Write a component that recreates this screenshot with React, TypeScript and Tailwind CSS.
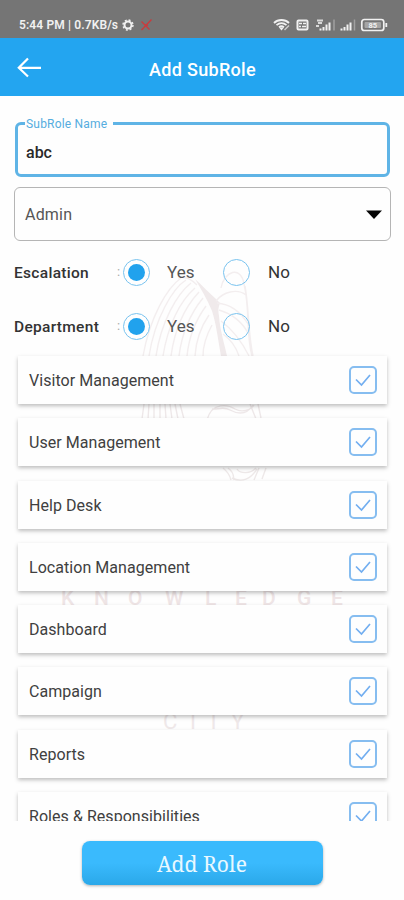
const modules = [
  "Visitor Management",
  "User Management",
  "Help Desk",
  "Location Management",
  "Dashboard",
  "Campaign",
  "Reports",
  "Roles & Responsibilities",
];

function StatusBar() {
  return (
    <div className="flex h-[38px] shrink-0 items-center justify-between bg-[#757575] pl-[19px] pr-[15px] pt-[11px] text-[#f1f1f1]">
      <div className="flex items-center">
        <span className="w-[103px] whitespace-nowrap text-[12px] font-semibold leading-4 tracking-[0.12px]">
          5:44 PM | 0.7KB/s
        </span>
        <svg width="12" height="12" viewBox="0 0 12 12" fill="none" stroke="currentColor">
          <circle cx="6" cy="6" r="3.5" strokeWidth="2" />
          <circle cx="6" cy="6" r="5" strokeWidth="1.4" strokeDasharray="2 1.93" />
        </svg>
        <svg className="ml-[6px]" width="14" height="14" viewBox="0 0 14 14" fill="none" stroke="#cb3a3c" strokeWidth="1.3">
          <path d="M1.500 3.500 9.500 11.500M11.500 1.500 1.500 12M5 6.500l3 1" />
        </svg>
      </div>
      <svg width="116" height="14" viewBox="0 0 116 14" fill="none" stroke="currentColor">
        <path d="M1 5C5 1 12 1 16 5M3.5 7.2c3-2.7 7-2.7 10 0M6 9.3c1.5-1.2 3.5-1.2 5 0" strokeWidth="1.8" />
        <path d="m8.5 12.500-2.500-3h5z" fill="currentColor" stroke="none" />
        <path d="m11.500 12 4.500-4.500" strokeWidth="1.4" opacity=".7" />
        <rect x="24.500" y="2.500" width="10" height="9" rx="1" strokeWidth="2" />
        <path d="M26 5.500h3m1 0h3M26 8.500h2m1 0h4" strokeWidth="1.300" />
        <path d="M44 2.500h6M43 8h3m-1-3h4" strokeWidth="1.800" opacity=".8" />
        <path d="M47.500 12.500v-2m3 2V9m3 3.500V6.500m3 6V4.500" strokeWidth="2" />
        <path d="M61 12.500v-11" strokeWidth="1.500" opacity=".35" />
        <path d="M68.500 12.500v-2m3 2V9m3 3.500V6.500m3 6V4.500" strokeWidth="2" />
        <path d="M81.500 12.500v-11" strokeWidth="1.500" opacity=".35" />
        <rect x="88.800" y="1.500" width="22" height="11" rx="2.500" strokeWidth="1.700" />
        <rect x="91.500" y="4" width="16.500" height="6" rx="1" fill="#a5a5a5" stroke="none" />
        <path d="M113.300 5v4" strokeWidth="1.800" />
        <text x="99.800" y="9.800" fill="currentColor" stroke="none" textAnchor="middle" fontSize="7.500" fontWeight="700">
          85
        </text>
      </svg>
    </div>
  );
}

function Header() {
  return (
    <header className="relative flex h-[58px] shrink-0 items-center justify-center bg-[#23a5f0] text-white">
      <svg className="absolute left-[17px] top-[19px]" width="25" height="21" viewBox="0 0 25 21" fill="none" stroke="currentColor" strokeWidth="2.200">
        <path d="M24 10.800H2M11 1.500 1.800 10.800l9.200 8.700" />
      </svg>
      <h1 className="pl-[1px] pt-[5px] text-[18px] font-medium leading-6 tracking-[0.3px]">Add SubRole</h1>
    </header>
  );
}

function Watermark() {
  return (
    <svg className="pointer-events-none absolute left-0 top-0" width="404" height="821" viewBox="0 0 404 821" fill="none" stroke="#f3eeef" strokeWidth="1.400">
      <path d="M143 356c7-39 24-68 38-78M149 356c6-38 24-68 37-76M156 356c5-34 21-62 35-73M163 356c5-31 17-55 32-68M171 356c4-29 15-50 28-64M179 356c3-24 11-42 24-58M187 356c2-20 8-35 19-50M195 356c1-15 5-28 14-41M203 356c0-9 3-20 9-31" />
      <path d="M178 278c6-2 13 1 19 7" />
      <path d="M195 279c8 7 14 14 21 20l4 4c-2 5-2 8-1 13 1 14 5 26 8 40h-6c-3-17-5-33-9-45-5-12-11-22-17-32z" fill="#f0eaeb" stroke="none" />
      <path d="M216 301c7-9 21-13 30-6M217 303c13 1 23 8 31 21M219 310c10 3 22 10 29 23M221 321c11 8 20 19 28 35M223 334c7 5 13 13 16 22M245 286c4 22 3 47 8 70M221 288c3-17 20-23 23-4 6 24 2 52 8 72" />
      <path d="m142 419 2-15m4 15 1-15m5 15v-15m6 15v-15m6 15-1-15m7 15-2-15m8 15-3-15m9 15-4-15M207 420c5-19 22-15 28-11 7 4 16 1 19-4M212 409c5 1 11-3 18 1 11 6 18 3 23-5M250 404l6 15m2-15 3 14" stroke="#eee8e9" />
      <path d="M223 468c5 4 7 8 8 12M228 468c7 5 5 9 6 12M237 469c3 5 14 5 19-1M232 478c10 5 19 1 25-9M259 468l-5 12m12-12-4 11" stroke="#eee9e9" />
      <text className="font-['Roboto']" x="61 94 128 165 205 235 262 297 331" y="605" fill="#efe5e6" stroke="none" fontSize="21" fontWeight="500">
        KNOWLEDGE
      </text>
      <text className="font-['Roboto']" x="163 190 207 231" y="729" fill="#efe8e9" stroke="none" fontSize="22">
        CITY
      </text>
    </svg>
  );
}

function NameField() {
  return (
    <fieldset className="ml-[15px] mr-[14px] mt-[19px] h-[62px] shrink-0 rounded-md border-[3px] border-[#5fb4e6] pl-[7px]">
      <legend className="h-[17px] w-[88px] whitespace-nowrap pl-[1px] text-[12px] leading-[18px] tracking-[0.2px] text-[#55addf]">
        SubRole Name
      </legend>
      <div className="pl-[1px] pt-[9px] text-[16px] font-medium leading-6 text-[#292929]">abc</div>
    </fieldset>
  );
}

function RoleSelect() {
  return (
    <button className="ml-[14px] mr-[13px] mt-[10px] flex h-[54px] shrink-0 items-center justify-between rounded-md border-[1.5px] border-[#b5b5b5] pl-[10px] pr-[7px] pt-[1px] text-[16px] tracking-[0.2px] text-[#555]">
      Admin
      <svg width="18" height="10" viewBox="0 0 18 10" fill="#050505">
        <path d="M1 0.500h16L9 9z" />
      </svg>
    </button>
  );
}

function Radio({ checked = false }: { checked?: boolean }) {
  return (
    <span className="flex size-[27px] shrink-0 items-center justify-center rounded-full border-[1.5px] border-[#79c3ef]">
      {checked && <span className="size-[17px] rounded-full bg-[#21a2ed]" />}
    </span>
  );
}

function RadioRow({ label }: { label: string }) {
  return (
    <div className="flex h-[54px] items-center pl-[14px]">
      <span className="w-[102px] whitespace-nowrap pt-[4px] text-[15.5px] font-medium tracking-[0.3px] text-[#333]">{label}</span>
      <span className="w-[7px] pl-[1px] text-[13px] text-[#aaa]">:</span>
      <Radio checked />
      <span className="w-[73px] pl-[17px] pt-[1px] text-[17px] text-[#555]">Yes</span>
      <Radio />
      <span className="pl-[18px] pt-[1px] text-[17px] text-[#333]">No</span>
    </div>
  );
}

function ModuleCard({ name }: { name: string }) {
  return (
    <div className="flex h-[48px] shrink-0 items-center justify-between bg-[#fefefe] pl-[11px] pr-[10px] text-[16px] tracking-[0.05px] text-[#404040] shadow-[0_2px_4px_rgba(0,0,0,0.26)]">
      <span className="pt-[2px]">{name}</span>
      <span className="flex size-[28px] items-center justify-center rounded-[5px] border-2 border-[#86bdf0]">
        <svg width="18" height="14" viewBox="0 0 18 14" fill="none" stroke="#72aef0" strokeWidth="1.700">
          <path d="m2 6.500 5.500 5.500L16 2" />
        </svg>
      </span>
    </div>
  );
}

export default function App() {
  return (
    <div className="relative flex h-[900px] w-[404px] flex-col overflow-hidden bg-[#fefefe] font-['Roboto',sans-serif]">
      <Watermark />
      <StatusBar />
      <Header />
      <main className="relative flex h-[725px] shrink-0 flex-col overflow-hidden">
        <NameField />
        <RoleSelect />
        <div className="mt-[4px] shrink-0">
          <RadioRow label="Escalation" />
          <RadioRow label="Department" />
        </div>
        <div className="mt-[3px] flex flex-col gap-[14.300px] pl-[18px] pr-[17px]">
          {modules.map((name) => (
            <ModuleCard key={name} name={name} />
          ))}
        </div>
      </main>
      <button className="mx-auto mt-[20px] h-[44px] w-[241px] shrink-0 rounded-lg bg-linear-to-b from-[#3abafd] from-50% to-[#2aa8e9] pt-[3px] font-['Noto_Serif','DejaVu_Serif',serif] text-[21px] tracking-[0.1px] text-[#e9f8ff] shadow-[0_1px_3px_rgba(0,0,0,0.3)]">
        Add Role
      </button>
    </div>
  );
}
